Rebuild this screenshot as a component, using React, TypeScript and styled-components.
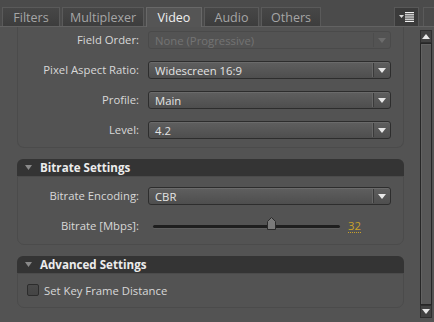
import React from 'react'
import styled, { createGlobalStyle } from 'styled-components'

const GlobalStyle = createGlobalStyle`
  html, body {
    margin: 0;
    padding: 0;
    background: #535353;
  }
  body {
    font-family: 'Open Sans', 'Liberation Sans', Arial, sans-serif;
    font-size: 11.3px;
  }
`

const StyledWindow = styled.div`
  width: 434px;
  height: 322px;
  display: flex;
  flex-direction: column;
  background: #535353;
  overflow: hidden;
`

const StyledTabBar = styled.div`
  height: 27px;
  box-sizing: border-box;
  display: flex;
  align-items: flex-end;
  gap: 2px;
  padding: 0 0 0 2px;
  border-bottom: 1px solid #626262;
  background: #4b4b4b;
`

const StyledTab = styled.div<{ $active?: boolean; $width: number }>`
  width: ${({ $width }) => $width}px;
  box-sizing: border-box;
  display: flex;
  align-items: center;
  justify-content: center;
  font-size: 12.5px;
  border: 1px solid ${({ $active }) => ($active ? '#686868' : '#5a5a5a')};
  border-bottom: none;
  margin-bottom: ${({ $active }) => ($active ? '-1px' : '0')};
  height: ${({ $active }) => ($active ? '20px' : '19px')};
  color: ${({ $active }) => ($active ? '#f0f0f0' : '#a6a6a6')};
  background: ${({ $active }) =>
    $active ? '#555555' : 'linear-gradient(#474747, #3d3d3d)'};
`

const StyledTabSpacer = styled.div`
  flex: 1;
`

const StyledMenuButton = styled.div`
  width: 25px;
  height: 19px;
  box-sizing: border-box;
  display: flex;
  align-items: center;
  justify-content: center;
  background: #3b3b3b;
  border: 1px solid #585858;
  border-bottom: none;
`

const StyledCorner = styled.div`
  width: 11px;
  height: 19px;
  margin-left: 2px;
  box-sizing: border-box;
  border: 1px solid #5a5a5a;
  border-right: none;
  border-bottom: none;
  background: #4a4a4a;
`

const StyledBody = styled.div`
  flex: 1;
  display: flex;
  min-height: 0;
`

const StyledContent = styled.div`
  flex: 1;
  display: flex;
  flex-direction: column;
  gap: 11px;
  padding: 0 16px 0 17px;
  overflow: hidden;
`

const StyledSection = styled.section`
  display: flex;
  flex-direction: column;
`

const StyledSectionHeader = styled.header`
  height: 17px;
  display: flex;
  align-items: center;
  gap: 8px;
  padding-left: 8px;
  background: #343434;
  border-radius: 6px 6px 0 0;
  color: #ececec;
  font-weight: bold;
  font-size: 11.6px;
`

const StyledSectionBody = styled.div<{ $pad: string }>`
  display: flex;
  flex-direction: column;
  gap: 12px;
  padding: ${({ $pad }) => $pad};
  border: 1px solid #4b4b4b;
  border-radius: 0 0 7px 7px;
`

const StyledCutBody = styled(StyledSectionBody)`
  border-top: none;
`

const StyledRow = styled.div`
  display: grid;
  grid-template-columns: 121px 1fr;
  column-gap: 9px;
  align-items: center;
  height: 18px;
`

const StyledLabel = styled.label`
  text-align: right;
  color: #d8d8d8;
  white-space: nowrap;
  line-height: 16px;
`

const StyledSelect = styled.div<{ $disabled?: boolean }>`
  height: 18px;
  box-sizing: border-box;
  display: flex;
  align-items: center;
  border-radius: 3px;
  border: 1px solid ${({ $disabled }) => ($disabled ? '#4a4a4a' : '#2d2d2d')};
  background: ${({ $disabled }) =>
    $disabled ? '#535353' : 'linear-gradient(#5f5f5f, #4e4e4e)'};
  box-shadow: ${({ $disabled }) =>
    $disabled ? 'none' : 'inset 0 1px 0 rgba(255,255,255,0.08)'};
  color: ${({ $disabled }) => ($disabled ? '#747474' : '#e4e4e4')};
`

const StyledSelectValue = styled.span`
  flex: 1;
  padding-left: 6px;
  white-space: nowrap;
  overflow: hidden;
  line-height: 15px;
`

const StyledSelectArrow = styled.span<{ $disabled?: boolean }>`
  width: 16px;
  height: 14px;
  display: flex;
  align-items: center;
  justify-content: center;
  border-left: 1px solid ${({ $disabled }) => ($disabled ? '#4c4c4c' : '#3a3a3a')};
  box-shadow: -1px 0 0 ${({ $disabled }) => ($disabled ? 'transparent' : '#666')};
`

const StyledSlider = styled.div`
  display: flex;
  align-items: center;
`

const StyledTrack = styled.div`
  position: relative;
  width: 187px;
  height: 3px;
  margin-left: 5px;
  border-radius: 2px;
  background: #1e1e1e;
  box-shadow: 0 1px 0 #5e5e5e;
`

const StyledThumb = styled.svg`
  position: absolute;
  top: -8px;
  margin-left: -4px;
`

const StyledValue = styled.span`
  margin-left: 8px;
  color: #caa22a;
  border-bottom: 1px dotted #caa22a;
  line-height: 12px;
`

const StyledCheckRow = styled.label`
  display: flex;
  align-items: center;
  gap: 5px;
  height: 18px;
  padding-left: 9px;
  color: #d8d8d8;
`

const StyledCheckbox = styled.span`
  width: 12px;
  height: 12px;
  box-sizing: border-box;
  border: 1px solid #2c2c2c;
  border-radius: 2px;
  background: linear-gradient(#4a4a4a, #444);
`

const StyledScrollbar = styled.div`
  width: 12px;
  margin: 3px 2px 4px 0;
  display: flex;
  flex-direction: column;
`

const StyledScrollButton = styled.div`
  height: 13px;
  display: flex;
  align-items: center;
  justify-content: center;
  background: #424242;
  border: 1px solid #2e2e2e;
  box-sizing: border-box;
`

const StyledScrollThumb = styled.div`
  flex: 1;
  box-sizing: border-box;
  border: 1px solid #262626;
  background: #575757;
  box-shadow: inset 1px 1px 0 #626262;
`

const Arrow = ({ up, color = '#e8e8e8' }: { up?: boolean; color?: string }) => (
  <svg width="8" height="5" viewBox="0 0 8 5">
    <path d={up ? 'M0 5 L4 0 L8 5 Z' : 'M0 0 L8 0 L4 5 Z'} fill={color} />
  </svg>
)

const Select = ({ value, disabled }: { value: string; disabled?: boolean }) => (
  <StyledSelect $disabled={disabled}>
    <StyledSelectValue>{value}</StyledSelectValue>
    <StyledSelectArrow $disabled={disabled}>
      <Arrow color={disabled ? '#6c6c6c' : '#e8e8e8'} />
    </StyledSelectArrow>
  </StyledSelect>
)

const SectionHeader = ({ title }: { title: string }) => (
  <StyledSectionHeader>
    <svg width="7" height="5" viewBox="0 0 7 5">
      <path d="M0 0 L7 0 L3.5 5 Z" fill="#8a8a8a" />
    </svg>
    {title}
  </StyledSectionHeader>
)

const tabs = [
  { name: 'Filters', width: 58 },
  { name: 'Multiplexer', width: 82 },
  { name: 'Video', width: 56, active: true },
  { name: 'Audio', width: 55 },
  { name: 'Others', width: 60 },
]

const videoRows = [
  { label: 'Pixel Aspect Ratio:', value: 'Widescreen 16:9' },
  { label: 'Profile:', value: 'Main' },
  { label: 'Level:', value: '4.2' },
]

const bitrate = 32
const bitratePos = 118

export default function App() {
  return (
    <>
      <GlobalStyle />
      <StyledWindow>
        <StyledTabBar>
          {tabs.map((tab) => (
            <StyledTab key={tab.name} $active={tab.active} $width={tab.width}>
              {tab.name}
            </StyledTab>
          ))}
          <StyledTabSpacer />
          <StyledMenuButton>
            <svg width="15" height="10" viewBox="0 0 15 10">
              <path d="M0 3 L5 3 L2.5 6 Z" fill="#d8d8d8" />
              <rect x="6" y="0" width="9" height="1.2" fill="#f0f0f0" />
              <rect x="6" y="2.2" width="9" height="1.2" fill="#f0f0f0" />
              <rect x="6" y="4.4" width="9" height="1.2" fill="#f0f0f0" />
              <rect x="6" y="6.6" width="9" height="1.2" fill="#f0f0f0" />
              <rect x="6" y="8.8" width="9" height="1.2" fill="#f0f0f0" />
            </svg>
          </StyledMenuButton>
          <StyledCorner />
        </StyledTabBar>

        <StyledBody>
          <StyledContent>
            <StyledSection>
              <StyledCutBody $pad="4px 12px 8px 0">
                <StyledRow>
                  <StyledLabel>Field Order:</StyledLabel>
                  <Select value="None (Progressive)" disabled />
                </StyledRow>
                {videoRows.map((row) => (
                  <StyledRow key={row.label}>
                    <StyledLabel>{row.label}</StyledLabel>
                    <Select value={row.value} />
                  </StyledRow>
                ))}
              </StyledCutBody>
            </StyledSection>

            <StyledSection>
              <SectionHeader title="Bitrate Settings" />
              <StyledSectionBody $pad="10px 12px 9px 0">
                <StyledRow>
                  <StyledLabel>Bitrate Encoding:</StyledLabel>
                  <Select value="CBR" />
                </StyledRow>
                <StyledRow>
                  <StyledLabel>Bitrate [Mbps]:</StyledLabel>
                  <StyledSlider>
                    <StyledTrack>
                      <StyledThumb
                        width="9"
                        height="13"
                        viewBox="0 0 9 13"
                        style={{ left: bitratePos }}
                      >
                        <path
                          d="M4.5 0.5 L8.5 4.5 L8.5 12.5 L0.5 12.5 L0.5 4.5 Z"
                          fill="#7a7a7a"
                          stroke="#2a2a2a"
                        />
                      </StyledThumb>
                    </StyledTrack>
                    <StyledValue>{bitrate}</StyledValue>
                  </StyledSlider>
                </StyledRow>
              </StyledSectionBody>
            </StyledSection>

            <StyledSection>
              <SectionHeader title="Advanced Settings" />
              <StyledSectionBody $pad="7px 12px 8px 0">
                <StyledCheckRow>
                  <StyledCheckbox />
                  Set Key Frame Distance
                </StyledCheckRow>
              </StyledSectionBody>
            </StyledSection>
          </StyledContent>

          <StyledScrollbar>
            <StyledScrollButton>
              <Arrow up />
            </StyledScrollButton>
            <StyledScrollThumb />
            <StyledScrollButton>
              <Arrow />
            </StyledScrollButton>
          </StyledScrollbar>
        </StyledBody>
      </StyledWindow>
    </>
  )
}
